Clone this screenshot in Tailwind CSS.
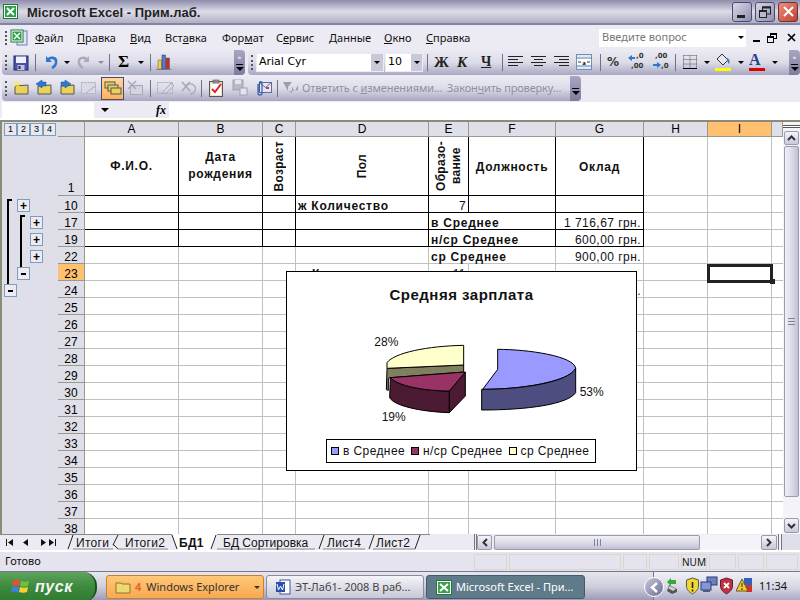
<!DOCTYPE html>
<html lang="ru">
<head>
<meta charset="UTF-8">
<title>Microsoft Excel - Прим.лаб.</title>
<script src="https://cdn.jsdelivr.net/npm/@tailwindcss/browser@4"></script>
</head>
<body class="w-[800px] h-[600px] overflow-hidden bg-[#ecebf4] font-['Liberation_Sans',sans-serif] text-black">
<div class="relative w-[800px] h-[600px] flex flex-col overflow-hidden">

  <!-- title bar -->
  <div class="h-[25px] shrink-0 flex items-center bg-gradient-to-b from-[#8e8dab] via-[#dcdce8] to-[#b0afc6] border-b-2 border-[#8583a3]">
    <svg class="ml-[3px] w-[15px] h-[15px]" viewBox="0 0 15 15"><rect x="0.5" y="0.5" width="14" height="14" fill="#fff" stroke="#1b7a34"/><rect x="2" y="2" width="11" height="11" fill="#2f9e4a"/><path d="M4 4l7 7M11 4l-7 7" stroke="#fff" stroke-width="2"/></svg>
    <span class="ml-[9px] mt-[2px] font-bold text-[13px] text-[#222]">Microsoft Excel - Прим.лаб.</span>
    <div class="ml-auto mr-[2px] flex gap-[3px]">
      <div class="w-[20px] h-[20px] rounded-[3px] border border-[#4a4a70] bg-gradient-to-br from-[#d8d8e8] to-[#9090b0] flex items-end justify-start pl-[4px] pb-[3px]"><div class="w-[8px] h-[3px] bg-[#222]"></div></div>
      <div class="w-[20px] h-[20px] rounded-[3px] border border-[#4a4a70] bg-gradient-to-br from-[#d8d8e8] to-[#9090b0] flex items-center justify-center"><svg class="w-[12px] h-[12px]" viewBox="0 0 12 12" fill="none" stroke="#222"><rect x="3.5" y="1" width="8" height="7" stroke-width="1"/><path d="M3 1.5h9" stroke-width="2"/><rect x="0.5" y="4.5" width="7" height="7" fill="#b8b8d0"/><path d="M0 5h8" stroke-width="2"/></svg></div>
      <div class="w-[20px] h-[20px] rounded-[3px] border border-[#70302a] bg-gradient-to-br from-[#e89080] to-[#c04030] flex items-center justify-center"><svg class="w-[13px] h-[13px]" viewBox="0 0 13 13"><path d="M2 2l9 9M11 2l-9 9" stroke="#fff" stroke-width="2"/></svg></div>
    </div>
  </div>

  <!-- menu bar -->
  <div class="h-[25px] shrink-0 flex items-center font-['Noto_Sans',sans-serif] text-[11px] text-[#111]">
    <div class="ml-[5px] w-[2px] h-[14px] border-l-2 border-dotted border-[#555]"></div>
    <svg class="ml-[3px] w-[18px] h-[17px]" viewBox="0 0 18 17"><rect x="7" y="2" width="10" height="14" fill="#dfe6f5" stroke="#6a7fb5"/><rect x="1" y="1" width="12" height="12" fill="#fff" stroke="#1b7a34"/><rect x="2.500" y="2.500" width="9" height="9" fill="#2f9e4a"/><path d="M4 4l6 6M10 4l-6 6" stroke="#fff" stroke-width="1.500"/></svg>
    <div class="ml-[7px] mt-[1px] flex">
      <span class="w-[42px]"><u>Ф</u>айл</span>
      <span class="w-[53px]"><u>П</u>равка</span>
      <span class="w-[35px]"><u>В</u>ид</span>
      <span class="w-[57px]">Вст<u>а</u>вка</span>
      <span class="w-[54px]">Фор<u>м</u>ат</span>
      <span class="w-[53px]">С<u>е</u>рвис</span>
      <span class="w-[55px]"><u>Д</u>анные</span>
      <span class="w-[42px]"><u>О</u>кно</span>
      <span class="w-[60px]"><u>С</u>правка</span>
    </div>
    <div class="ml-[113px] w-[147px] h-[18px] bg-white flex items-center pl-[3px] text-[#777]">Введите вопрос<span class="ml-auto mr-[2px] w-0 h-0 border-x-[3px] border-t-[3px] border-x-transparent border-t-black"></span></div>
    <div class="ml-[7px] w-[7px] h-[2px] bg-black mt-[6px]"></div>
    <svg class="ml-[7px] w-[10px] h-[10px]" viewBox="0 0 10 10" fill="none" stroke="#000"><rect x="3.500" y="0.500" width="6" height="5"/><path d="M3 1h7" stroke-width="2"/><rect x="0.500" y="3.500" width="6" height="6" fill="#ecebf4"/><path d="M0 4h7" stroke-width="2"/></svg>
    <svg class="ml-[10px] w-[9px] h-[9px]" viewBox="0 0 9 9"><path d="M1 1l7 7M8 1l-7 7" stroke="#000" stroke-width="1.700"/></svg>
  </div>

  <!-- standard + formatting toolbars -->
  <div class="h-[26px] shrink-0 flex">
    <div class="ml-[2px] w-[243px] h-[25px] rounded-[4px] bg-gradient-to-b from-[#ecebf4] via-[#dcdce8] to-[#a8a7c2] flex items-center relative overflow-hidden">
      <div class="absolute left-[3px] top-[5px] w-[2px] h-[15px] border-l-2 border-dotted border-[#555]"></div>
      <svg class="absolute left-[11px] top-[5px] w-[16px] h-[16px]" viewBox="0 0 16 16"><rect x="1" y="1" width="14" height="14" fill="#4a50b0" stroke="#23285c"/><rect x="3" y="1.500" width="10" height="6.500" fill="#eef0fa"/><rect x="4.500" y="10" width="7" height="5" fill="#c0c4dc"/><rect x="5.500" y="11" width="2" height="3" fill="#23285c"/></svg>
      <div class="absolute left-[33px] top-[4px] w-px h-[17px] bg-[#6f6e8c]"></div>
      <svg class="absolute left-[41px] top-[4px] w-[16px] h-[16px]" viewBox="0 0 16 16" fill="none"><path d="M3 2v6h6" fill="#2f78cf" /><path d="M4 7C7 2 14 3 13 9c-.4 2-2 4-4 5" stroke="#2f78cf" stroke-width="2.600"/></svg>
      <span class="absolute left-[62px] top-[11px] w-0 h-0 border-x-[3px] border-t-[3px] border-x-transparent border-t-black"></span>
      <svg class="absolute left-[74px] top-[4px] w-[16px] h-[16px]" viewBox="0 0 16 16" fill="none"><path d="M13 2v6H7" fill="#a9a9bd"/><path d="M12 7C9 2 2 3 3 9c.4 2 2 4 4 5" stroke="#a9a9bd" stroke-width="2.400"/></svg>
      <span class="absolute left-[96px] top-[11px] w-0 h-0 border-x-[3px] border-t-[3px] border-x-transparent border-t-[#8a8aa0]"></span>
      <div class="absolute left-[107px] top-[4px] w-px h-[17px] bg-[#6f6e8c]"></div>
      <span class="absolute left-[116px] top-[2px] font-['Liberation_Serif',serif] font-bold text-[17px] leading-[20px]">Σ</span>
      <span class="absolute left-[136px] top-[11px] w-0 h-0 border-x-[3px] border-t-[3px] border-x-transparent border-t-black"></span>
      <div class="absolute left-[148px] top-[4px] w-px h-[17px] bg-[#6f6e8c]"></div>
      <svg class="absolute left-[153px] top-[3px] w-[18px] h-[18px]" viewBox="0 0 18 18"><path d="M1 16h16l-1 1H1z" fill="#7a8ab0"/><rect x="3" y="7" width="3.500" height="9" fill="#f0d040" stroke="#555" stroke-width=".5"/><rect x="7" y="2" width="3.500" height="14" fill="#5a7ad0" stroke="#333" stroke-width=".5"/><rect x="11" y="5" width="3.500" height="11" fill="#c03030" stroke="#555" stroke-width=".5"/></svg>
      <div class="absolute right-0 top-0 w-[11px] h-[25px] bg-gradient-to-b from-[#a8a7c2] to-[#7d7c9e] flex flex-col items-center pt-[4px]">
        <span class="text-white text-[6px] leading-[7px] font-bold">»</span>
        <div class="mt-[3px] w-[7px] h-px bg-black"></div>
        <span class="mt-[2px] w-0 h-0 border-x-[4px] border-t-[4px] border-x-transparent border-t-black"></span>
      </div>
    </div>

    <div class="ml-[3px] w-[552px] h-[25px] rounded-[4px] bg-gradient-to-b from-[#ecebf4] via-[#dcdce8] to-[#a8a7c2] relative overflow-hidden">
      <div class="absolute left-[3px] top-[5px] w-[2px] h-[15px] border-l-2 border-dotted border-[#555]"></div>
      <div class="absolute left-[8px] top-[3px] w-[128px] h-[19px] bg-white border border-[#ecebf4] flex items-center font-['DejaVu_Sans',sans-serif] text-[11px] pl-[2px]">Arial Cyr<span class="ml-auto w-[12px] h-full bg-[#c8c8d8] flex items-center justify-center"><span class="w-0 h-0 border-x-[3px] border-t-[3px] border-x-transparent border-t-black"></span></span></div>
      <div class="absolute left-[137px] top-[3px] w-[38px] h-[19px] bg-white border border-[#ecebf4] flex items-center font-['DejaVu_Sans',sans-serif] text-[11px] pl-[2px]">10<span class="ml-auto w-[11px] h-full bg-[#c8c8d8] flex items-center justify-center"><span class="w-0 h-0 border-x-[3px] border-t-[3px] border-x-transparent border-t-black"></span></span></div>
      <div class="absolute left-[179px] top-[4px] w-px h-[17px] bg-[#6f6e8c]"></div>
      <span class="absolute left-[186px] top-[3px] font-['Liberation_Serif',serif] font-bold text-[15px] leading-[18px] text-[#222]">Ж</span>
      <span class="absolute left-[209px] top-[3px] font-['Liberation_Serif',serif] font-bold italic text-[15px] leading-[18px] text-[#222]">К</span>
      <span class="absolute left-[233px] top-[3px] font-['Liberation_Serif',serif] font-bold underline text-[14px] leading-[18px] text-[#222]">Ч</span>
      <div class="absolute left-[254px] top-[4px] w-px h-[17px] bg-[#6f6e8c]"></div>
      <svg class="absolute left-[260px] top-[6px] w-[15px] h-[12px]" viewBox="0 0 15 12" stroke="#222"><path d="M0 .5h15M0 3.500h10M0 6.500h15M0 9.500h10"/></svg>
      <svg class="absolute left-[283px] top-[6px] w-[15px] h-[12px]" viewBox="0 0 15 12" stroke="#222"><path d="M0 .5h15M3 3.500h9M0 6.500h15M3 9.500h9"/></svg>
      <svg class="absolute left-[306px] top-[6px] w-[15px] h-[12px]" viewBox="0 0 15 12" stroke="#222"><path d="M0 .5h15M5 3.500h10M0 6.500h15M5 9.500h10"/></svg>
      <svg class="absolute left-[328px] top-[4px] w-[16px] h-[16px]" viewBox="0 0 16 16"><rect x=".5" y=".5" width="15" height="15" fill="#dfe8f5" stroke="#6f8fb5"/><path d="M.5 4h15M.5 12h15" stroke="#6f8fb5"/><rect x="1" y="5" width="14" height="6" fill="#fff"/><text x="8" y="10.500" font-size="7" font-weight="bold" text-anchor="middle" font-family="Liberation Serif">a</text><path d="M2 8h3M14 8h-3" stroke="#333"/></svg>
      <div class="absolute left-[352px] top-[4px] w-px h-[17px] bg-[#6f6e8c]"></div>
      <span class="absolute left-[359px] top-[3px] font-['DejaVu_Sans',sans-serif] font-bold text-[12px] leading-[18px] text-[#333]">%</span>
      <svg class="absolute left-[380px] top-[4px] w-[17px] h-[16px]" viewBox="0 0 17 16"><path d="M0 4l4-3v2h3v2H4v2z" fill="#2f78cf"/></svg>
      <span class="absolute left-[388px] top-[1px] font-['DejaVu_Sans',sans-serif] font-bold text-[7px] leading-[10px] text-[#333]">,0</span>
      <span class="absolute left-[383px] top-[11px] font-['DejaVu_Sans',sans-serif] font-bold text-[7px] leading-[10px] text-[#333]">,00</span>
      <svg class="absolute left-[404px] top-[11px] w-[9px] h-[9px]" viewBox="0 0 9 9"><path d="M9 4L5 1v2H1v2h4v2z" fill="#2f78cf"/></svg>
      <span class="absolute left-[407px] top-[1px] font-['DejaVu_Sans',sans-serif] font-bold text-[7px] leading-[10px] text-[#333]">,00</span>
      <span class="absolute left-[413px] top-[11px] font-['DejaVu_Sans',sans-serif] font-bold text-[7px] leading-[10px] text-[#333]">,0</span>
      <div class="absolute left-[427px] top-[4px] w-px h-[17px] bg-[#6f6e8c]"></div>
      <svg class="absolute left-[435px] top-[5px] w-[14px] h-[14px]" viewBox="0 0 14 14" fill="none"><path d="M.5.5h13M.5 4.500h13M.5 9h13M.5.5v13M7 .5v13M13.500.5v13" stroke="#555" stroke-dasharray="1 1"/><path d="M0 13.500h14" stroke="#000"/></svg>
      <span class="absolute left-[456px] top-[11px] w-0 h-0 border-x-[3px] border-t-[3px] border-x-transparent border-t-black"></span>
      <svg class="absolute left-[467px] top-[3px] w-[16px] h-[14px]" viewBox="0 0 16 14"><path d="M7 1l6 6-5 5-6-6z" fill="#e8e8f0" stroke="#333"/><path d="M12 5c3 1 3 4 2 6-1-1-2-3-2-6z" fill="#3a78c8"/></svg>
      <div class="absolute left-[467px] top-[18px] w-[16px] h-[3px] bg-[#ffff00]"></div>
      <span class="absolute left-[490px] top-[11px] w-0 h-0 border-x-[3px] border-t-[3px] border-x-transparent border-t-black"></span>
      <span class="absolute left-[501px] top-[1px] font-['Liberation_Serif',serif] font-bold text-[16px] leading-[17px] text-[#23408f]">A</span>
      <div class="absolute left-[501px] top-[18px] w-[16px] h-[3px] bg-[#e00000]"></div>
      <span class="absolute left-[524px] top-[11px] w-0 h-0 border-x-[3px] border-t-[3px] border-x-transparent border-t-black"></span>
      <div class="absolute right-0 top-0 w-[11px] h-[25px] bg-gradient-to-b from-[#a8a7c2] to-[#7d7c9e] flex flex-col items-center pt-[4px]">
        <span class="text-white text-[6px] leading-[7px] font-bold">»</span>
        <div class="mt-[3px] w-[7px] h-px bg-black"></div>
        <span class="mt-[2px] w-0 h-0 border-x-[4px] border-t-[4px] border-x-transparent border-t-black"></span>
      </div>
    </div>
  </div>

  <!-- reviewing toolbar -->
  <div class="h-[26px] shrink-0">
    <div class="ml-[2px] w-[579px] h-[25px] rounded-[4px] bg-gradient-to-b from-[#ecebf4] via-[#dcdce8] to-[#a8a7c2] relative overflow-hidden">
      <div class="absolute left-[3px] top-[5px] w-[2px] h-[15px] border-l-2 border-dotted border-[#555]"></div>
      <svg class="absolute left-[10px] top-[4px] w-[17px] h-[16px]" viewBox="0 0 17 16"><path d="M3 6l13-1v9H3z" fill="#e8d25c" stroke="#555"/><path d="M5 1v7M1 4h8M2 1l6 6M8 1L2 7" stroke="#ffe860"/></svg>
      <svg class="absolute left-[33px] top-[3px] w-[17px] h-[17px]" viewBox="0 0 17 17"><path d="M3 7l13-1v9H3z" fill="#e8d25c" stroke="#555"/><path d="M1 5l6-4v2h4v4H7v2z" fill="#2f78cf" stroke="#1d4f90" stroke-width=".5"/></svg>
      <svg class="absolute left-[56px] top-[3px] w-[17px] h-[17px]" viewBox="0 0 17 17"><path d="M3 7l13-1v9H3z" fill="#e8d25c" stroke="#555"/><path d="M13 5L7 1v2H3v4h4v2z" fill="#2f78cf" stroke="#1d4f90" stroke-width=".5"/></svg>
      <svg class="absolute left-[79px] top-[4px] w-[16px] h-[15px]" viewBox="0 0 16 15" fill="none"><rect x=".5" y="2.500" width="14" height="11" fill="#dadae4" stroke="#a9a9bd" stroke-dasharray="2 1"/><path d="M5 13l9-7" stroke="#a9a9bd"/></svg>
      <div class="absolute left-[99px] top-[1px] w-[23px] h-[23px] bg-gradient-to-b from-[#ffd79c] to-[#ffb056] border border-[#4b4b6f]"></div>
      <svg class="absolute left-[102px] top-[5px] w-[18px] h-[15px]" viewBox="0 0 18 15"><rect x="1" y="1" width="10" height="6" fill="#e8d25c" stroke="#555"/><rect x="4" y="4" width="10" height="6" fill="#e8d25c" stroke="#555"/><rect x="7" y="7" width="10" height="6" fill="#e8d25c" stroke="#555"/></svg>
      <svg class="absolute left-[125px] top-[4px] w-[17px] h-[16px]" viewBox="0 0 17 16" fill="none"><rect x="3.500" y="5.500" width="12" height="9" fill="#d4d4e0" stroke="#a9a9bd"/><path d="M1 1l8 8M9 1L1 9" stroke="#a9a9bd" stroke-width="1.500"/></svg>
      <div class="absolute left-[148px] top-[4px] w-px h-[17px] bg-[#6f6e8c]"></div>
      <svg class="absolute left-[155px] top-[4px] w-[18px] h-[16px]" viewBox="0 0 18 16" fill="none"><rect x=".5" y="2.500" width="15" height="11" stroke="#a9a9bd" stroke-dasharray="2 1"/><path d="M5 13l9-10 3 3-8 7z" fill="#dadae4" stroke="#a9a9bd"/></svg>
      <svg class="absolute left-[178px] top-[4px] w-[17px] h-[16px]" viewBox="0 0 17 16" fill="none"><path d="M2 2l8 9M10 2l-8 9" stroke="#a9a9bd" stroke-width="1.800"/><path d="M6 5c6-3 11 1 9 6-1 2-3 3-5 3" stroke="#a9a9bd" stroke-width="1.300"/></svg>
      <div class="absolute left-[199px] top-[4px] w-px h-[17px] bg-[#6f6e8c]"></div>
      <svg class="absolute left-[206px] top-[3px] w-[16px] h-[18px]" viewBox="0 0 16 18"><rect x="1.500" y="2.500" width="13" height="15" fill="#f4e0c0" stroke="#555"/><rect x="3" y="5" width="10" height="11" fill="#fff"/><rect x="5" y="1" width="6" height="3" fill="#9090a8" stroke="#444" stroke-width=".5"/><path d="M4 10l3 3 6-8" fill="none" stroke="#e02020" stroke-width="2"/></svg>
      <svg class="absolute left-[230px] top-[3px] w-[16px] h-[17px]" viewBox="0 0 16 17"><rect x="1" y="1" width="10" height="10" fill="#b8b8c8" stroke="#a0a0b4"/><rect x="3" y="1" width="6" height="4" fill="#e4e4ec"/><rect x="8" y="9" width="7" height="7" fill="#e4e4ec" stroke="#a0a0b4"/></svg>
      <svg class="absolute left-[252px] top-[3px] w-[18px] h-[18px]" viewBox="0 0 18 18" fill="none"><rect x="5.500" y="3.500" width="12" height="10" fill="#dfe6f5" stroke="#5b6f9f"/><path d="M5.500 3.500l6 5 6-5" stroke="#5b6f9f"/><rect x="12" y="8" width="3" height="2" fill="#e03030"/><path d="M4 5v9a2 2 0 0 0 4 0V4a1.300 1.300 0 0 0-2.600 0v9" stroke="#3a5aa0" stroke-width="1.200"/></svg>
      <div class="absolute left-[275px] top-[4px] w-px h-[17px] bg-[#6f6e8c]"></div>
      <svg class="absolute left-[281px] top-[5px] w-[16px] h-[14px]" viewBox="0 0 16 14" fill="#9c9cb0"><path d="M0 1h9L5 6v4zM9 5v7l-3-2h6l3-6v5l-4 1z"/></svg>
      <span class="absolute left-[300px] top-[4px] font-['Noto_Sans',sans-serif] text-[11px] leading-[16px] tracking-[-0.12px] text-[#8f8fa5] whitespace-nowrap">Ответить с <u>и</u>зменениями...</span>
      <span class="absolute left-[445px] top-[4px] font-['Noto_Sans',sans-serif] text-[11px] leading-[16px] tracking-[-0.15px] text-[#8f8fa5] whitespace-nowrap">Закон<u>ч</u>ить проверку...</span>
      <div class="absolute right-0 top-0 w-[11px] h-[25px] bg-gradient-to-b from-[#a8a7c2] to-[#7d7c9e] flex flex-col items-center pt-[12px]">
        <div class="w-[7px] h-px bg-black"></div>
        <span class="mt-[2px] w-0 h-0 border-x-[4px] border-t-[4px] border-x-transparent border-t-black"></span>
      </div>
    </div>
  </div>

  <!-- formula bar -->
  <div class="h-[16px] shrink-0 flex items-center text-[12px]">
    <div class="ml-[2px] w-[92px] h-full bg-white flex items-center justify-center pl-[2px]">I23</div>
    <div class="w-[75px] h-full flex items-center pl-[7px]"><span class="w-0 h-0 border-x-[4px] border-t-[4px] border-x-transparent border-t-black"></span><span class="ml-[47px] font-['Liberation_Serif',serif] italic font-bold text-[12px]">fx</span></div>
    <div class="flex-1 h-full bg-white"></div>
  </div>
  <div class="h-[2px] shrink-0 bg-white"></div>

  <!-- sheet -->
  <div class="relative h-[414px] shrink-0 flex border-t-2 border-[#8b8b78] overflow-hidden">
    <div class="w-[58px] shrink-0 bg-[#dfdfe9] border-l-2 border-[#8b8b78]"></div>
    <div class="w-[725px] shrink-0 bg-white overflow-hidden" id="grid"></div>
    <div class="w-[17px] shrink-0 bg-[#f4f4f8] flex flex-col items-center">
      <div class="h-[3px] w-full mt-[3px] border-y border-[#555] bg-white"></div>
      <div class="mt-[3px] w-[15px] h-[14px] rounded-[2px] bg-gradient-to-b from-[#f4f4fa] to-[#c8c8d8] border border-[#9a9ab0] flex items-center justify-center"><svg class="w-[9px] h-[6px]" viewBox="0 0 9 6" fill="none"><path d="M1 5l3.500-3.500L8 5" stroke="#333" stroke-width="2"/></svg></div>
      <div class="mt-px w-[15px] h-[351px] rounded-[2px] bg-gradient-to-r from-[#f0f0f6] via-[#dcdce8] to-[#c0c0d2] border border-[#9a9ab0] flex items-center justify-center"><div class="w-[7px] h-[7px] border-y border-[#8080a0] flex items-center"><div class="w-full h-px bg-[#8080a0]"></div></div></div>
      <div class="mt-[21px] w-[15px] h-[15px] rounded-[2px] bg-gradient-to-b from-[#f4f4fa] to-[#c8c8d8] border border-[#9a9ab0] flex items-center justify-center"><svg class="w-[9px] h-[6px]" viewBox="0 0 9 6" fill="none"><path d="M1 1l3.500 3.500L8 1" stroke="#333" stroke-width="2"/></svg></div>
    </div>

    <!-- outline level buttons and group brackets, over the gutter -->
    <div class="absolute left-[4px] top-[1px] w-[52px] h-[13px] flex text-[9px] leading-[11px] text-center">
      <span class="w-[13px] border border-[#7f9db9] bg-[#e8e8f0]">1</span><span class="w-[13px] border border-[#7f9db9] bg-[#e8e8f0]">2</span><span class="w-[13px] border border-[#7f9db9] bg-[#e8e8f0]">3</span><span class="w-[13px] border border-[#7f9db9] bg-[#e8e8f0]">4</span>
    </div>
    <div class="absolute left-[7px] top-[77px] w-[5px] h-[86px] border-l-2 border-t-2 border-black"></div>
    <div class="absolute left-[20px] top-[93px] w-[5px] h-[53px] border-l-2 border-t-2 border-black"></div>
    <div class="absolute left-[17px] top-[77px] w-[13px] h-[13px] border border-[#7f9db9] bg-[#ecebf4] flex items-center justify-center font-bold text-[12px] leading-none">+</div>
    <div class="absolute left-[30px] top-[94px] w-[13px] h-[13px] border border-[#7f9db9] bg-[#ecebf4] flex items-center justify-center font-bold text-[12px] leading-none">+</div>
    <div class="absolute left-[30px] top-[111px] w-[13px] h-[13px] border border-[#7f9db9] bg-[#ecebf4] flex items-center justify-center font-bold text-[12px] leading-none">+</div>
    <div class="absolute left-[30px] top-[128px] w-[13px] h-[13px] border border-[#7f9db9] bg-[#ecebf4] flex items-center justify-center font-bold text-[12px] leading-none">+</div>
    <div class="absolute left-[17px] top-[145px] w-[13px] h-[13px] border border-[#7f9db9] bg-[#ecebf4] flex items-center justify-center"><div class="w-[5px] h-[2px] bg-black"></div></div>
    <div class="absolute left-[4px] top-[162px] w-[13px] h-[13px] border border-[#7f9db9] bg-[#ecebf4] flex items-center justify-center"><div class="w-[5px] h-[2px] bg-black"></div></div>

    <!-- selected cell I23 -->
    <div class="absolute left-[707px] top-[142px] w-[66px] h-[19px] border-[3px] border-[#222]"></div>
    <div class="absolute left-[770px] top-[157px] w-[5px] h-[5px] bg-[#222]"></div>

    <!-- embedded chart -->
    <div class="absolute left-[286px] top-[149px] w-[351px] h-[200px] bg-white border border-black">
      <div class="mt-[14px] text-center font-bold text-[15px] leading-[18px] tracking-[0.5px] text-[#111]">Средняя зарплата</div>
      <svg class="absolute left-0 top-0 w-[349px] h-[198px]" viewBox="18 33 1047 594" fill="none" stroke="#000" stroke-width="3">
        <path d="M650 265C740 265 880 285 884 322C880 350 760 385 605 385L650 325Z" fill="#9999ff"/>
        <path d="M605 385C720 385 860 365 884 322L884 395C860 430 740 447 602 447L602 385Z" fill="#4d4d80"/>
        <path d="M318 322L548 312L548 333L328 350L322 352L322 388L316 386Z" fill="#808060"/>
        <path d="M548 253L548 312L318 322L318 305C340 275 440 255 548 253Z" fill="#ffffcc"/>
        <path d="M328 350C350 375 430 390 505 390L505 455C420 452 340 435 326 410Z" fill="#4d1a33"/>
        <path d="M505 390L553 333L553 405L505 455Z" fill="#4d1a33"/>
        <path d="M328 350L553 333L505 390C430 390 350 375 328 350Z" fill="#993366"/>
        <g fill="#111" stroke="none" font-family="Liberation Sans" font-size="36">
          <text x="896" y="405">53%</text>
          <text x="302" y="480">19%</text>
          <text x="280" y="255">28%</text>
        </g>
      </svg>
      <div class="absolute left-[39px] top-[167px] w-[270px] h-[24px] border border-black flex items-center text-[12px] tracking-[0.4px] text-[#111]">
        <span class="ml-[4px] w-[8px] h-[8px] bg-[#9999ff] border border-black"></span><span class="ml-[4px]">в Среднее</span>
        <span class="ml-[6px] w-[8px] h-[8px] bg-[#993366] border border-black"></span><span class="ml-[4px]">н/ср Среднее</span>
        <span class="ml-[6px] w-[8px] h-[8px] bg-[#ffffcc] border border-black"></span><span class="ml-[4px]">ср Среднее</span>
      </div>
    </div>
  </div>

  <!-- sheet tabs and horizontal scrollbar -->
  <div class="relative h-[16px] shrink-0 bg-[#ecebf4] flex text-[12px] tracking-[0.3px] text-[#111]">
    <svg class="absolute left-0 top-0 w-[430px] h-[16px]" viewBox="0 0 430 16" fill="none" stroke="#222">
      <path d="M172 0L217 0L211 16L178 16Z" fill="#fff" stroke="none"/>
      <path d="M0 .5H172M217 .5H474" stroke="#888"/>
      <path d="M68 15l5-14M118 15l-4-4-1 0 5-10M172 1l5 14M216 1l-5 14M319 15l5-14M369 15l5-14M415 15l5-14"/>
      <path d="M73 15h40M118 15h50M217 15h98M323 15h42M373 15h42" stroke="#888"/>
    </svg>
    <div class="relative w-[69px] flex items-center text-[9px]">
      <svg class="ml-[6px] w-[50px] h-[9px]" viewBox="0 0 50 9" fill="#111"><path d="M0 1h1v7H0zM7 1v7L2 4.500zM22 1v7l-5-3.500zM35 1v7l5-3.500zM50 1h-1v7h1zM43 1v7l5-3.500z"/></svg>
    </div>
    <span class="relative w-[49px] pl-[7px]">Итоги</span>
    <span class="relative w-[54px] pl-[7px]">Итоги2</span>
    <span class="relative w-[41px] pl-[7px] font-bold">БД1</span>
    <span class="relative w-[107px] pl-[10px] tracking-[0px]">БД Сортировка</span>
    <span class="relative w-[50px] pl-[7px]">Лист4</span>
    <span class="relative w-[50px] pl-[6px]">Лист2</span>
    <div class="absolute left-[474px] top-0 w-[3px] h-full border-x border-[#777]"></div>
    <div class="absolute left-[477px] top-[1px] w-[15px] h-[15px] rounded-[2px] bg-gradient-to-b from-[#f4f4fa] to-[#c8c8d8] border border-[#9a9ab0] flex items-center justify-center"><svg class="w-[6px] h-[9px]" viewBox="0 0 6 9" fill="none"><path d="M5 1L1.500 4.500 5 8" stroke="#333" stroke-width="2"/></svg></div>
    <div class="absolute left-[494px] top-[1px] w-[206px] h-[15px] rounded-[2px] bg-gradient-to-b from-[#f0f0f6] via-[#dcdce8] to-[#c0c0d2] border border-[#9a9ab0] flex items-center justify-center"><div class="w-[7px] h-[7px] border-x border-[#8080a0] flex justify-center"><div class="h-full w-px bg-[#8080a0]"></div></div></div>
    <div class="absolute left-[700px] top-[1px] w-[61px] h-[15px] bg-[#f4f4f8]"></div>
    <div class="absolute left-[761px] top-[1px] w-[16px] h-[15px] rounded-[2px] bg-gradient-to-b from-[#f4f4fa] to-[#c8c8d8] border border-[#9a9ab0] flex items-center justify-center"><svg class="w-[6px] h-[9px]" viewBox="0 0 6 9" fill="none"><path d="M1 1l3.500 3.500L1 8" stroke="#333" stroke-width="2"/></svg></div>
    <div class="absolute left-[778px] top-0 w-[4px] h-full border-x border-[#777] bg-[#f4f4f8]"></div>
    <div class="absolute left-[782px] top-0 w-[18px] h-full bg-[#dfdfe9]"></div>
  </div>

  <!-- status bar -->
  <div class="relative h-[21px] shrink-0 bg-[#e4e3ee] border-t-2 border-white flex items-center font-['Noto_Sans',sans-serif] text-[11px] text-[#111]">
    <span class="ml-[5px]">Готово</span>
    <div class="absolute left-[474px] top-[2px] flex gap-[2px]">
      <div class="w-[33px] h-[16px] border border-[#d8d8c8]"></div>
      <div class="w-[112px] h-[16px] border border-[#d8d8c8]"></div>
      <div class="w-[24px] h-[16px] border border-[#d8d8c8]"></div>
      <div class="w-[30px] h-[16px] border border-[#d8d8c8]"></div>
      <div class="w-[26px] h-[16px] border border-[#d8d8c8] flex items-center justify-center text-[10px] leading-none">NUM</div>
      <div class="w-[27px] h-[16px] border border-[#d8d8c8]"></div>
      <div class="w-[26px] h-[16px] border border-[#d8d8c8]"></div>
      <div class="w-[32px] h-[16px] border border-[#d8d8c8]"></div>
    </div>
  </div>

  <!-- taskbar -->
  <div class="relative h-[30px] shrink-0 bg-gradient-to-b from-[#e6e6ee] via-[#cfcfdc] to-[#9897b4] border-t border-[#77768f] overflow-hidden font-['Noto_Sans',sans-serif] text-[11px]">
    <div class="absolute left-0 top-0 w-[97px] h-[30px] rounded-r-[14px] bg-gradient-to-b from-[#5fa35f] via-[#3c8a3c] to-[#2f7a30] border-r-2 border-[#1d4f1d] flex items-center">
      <svg class="ml-[11px] w-[20px] h-[18px]" viewBox="0 0 20 18"><path d="M2 3c3-2 5-1 7 0L8 8C6 7 4 7 1 8z" fill="#e85030"/><path d="M10 3c3 1 5 1 8 0l-1 5c-3 1-5 1-8 0z" fill="#70c040"/><path d="M1 9c3-1 5-1 7 0l-1 6c-3-2-5-2-7 0z" fill="#4080e0"/><path d="M9 9c3 1 5 1 8 0l-1 5c-3 1-5 1-8 0z" fill="#f8d030"/></svg>
      <span class="ml-[4px] font-['Liberation_Sans',sans-serif] font-bold italic text-[16px] tracking-[0.6px] text-[#f4f4f4]">пуск</span>
    </div>
    <div class="absolute left-[106px] top-[3px] w-[158px] h-[24px] rounded-[3px] bg-gradient-to-b from-[#ffc878] to-[#f8a850] border border-[#c88030] flex items-center text-[#333] whitespace-nowrap">
      <svg class="ml-[8px] w-[16px] h-[14px]" viewBox="0 0 16 14"><path d="M1 3h5l1 1h8v9H1z" fill="#f0d870" stroke="#8a7530"/></svg>
      <span class="ml-[4px] font-bold text-[#e8642c]">4</span>
      <span class="ml-[5px]">Windows Explorer</span>
      <span class="ml-auto mr-[3px] w-0 h-0 border-x-[3px] border-t-[3px] border-x-transparent border-t-[#333]"></span>
    </div>
    <div class="absolute left-[266px] top-[3px] w-[158px] h-[24px] rounded-[3px] bg-gradient-to-b from-[#f4f4f8] to-[#c8c8d8] border border-[#8a8aa0] flex items-center text-[#444] whitespace-nowrap">
      <svg class="ml-[8px] w-[16px] h-[16px]" viewBox="0 0 16 16"><rect x="5" y="1" width="10" height="14" fill="#fff" stroke="#3858a8"/><rect x="1" y="3" width="9" height="10" fill="#2850a8"/><path d="M2 5l1.500 6L5.500 7 7.500 11 9 5" fill="none" stroke="#fff"/></svg>
      <span class="ml-[4px]">ЭТ-Лаб1- 2008 В раб...</span>
    </div>
    <div class="absolute left-[426px] top-[3px] w-[159px] h-[24px] rounded-[3px] bg-[#5f7a88] border border-[#455a68] flex items-center text-white whitespace-nowrap">
      <svg class="ml-[9px] w-[16px] h-[15px]" viewBox="0 0 16 15"><rect x=".5" y=".5" width="15" height="14" fill="#fff" stroke="#1b7a34"/><rect x="2" y="2" width="12" height="11" fill="#3aa050"/><path d="M4 4l8 7M12 4l-8 7" stroke="#fff" stroke-width="2"/></svg>
      <span class="ml-[4px]">Microsoft Excel - При...</span>
    </div>

    <!-- tray -->
    <div class="absolute left-[653px] top-0 w-[147px] h-[30px] border-l border-[#77768f] bg-gradient-to-b from-[#f0f0f6] via-[#d8d8e4] to-[#a5a4bf]"></div>
    <div class="absolute left-[644px] top-[5px] w-[20px] h-[20px] rounded-full bg-gradient-to-br from-[#c8c8dc] to-[#6e6e92] border border-white flex items-center justify-center"><svg class="w-[9px] h-[11px]" viewBox="0 0 9 11" fill="none"><path d="M7 1L2 5.500 7 10" stroke="#fff" stroke-width="2.500"/></svg></div>
    <svg class="absolute left-[665px] top-[5px] w-[17px] h-[18px]" viewBox="0 0 17 18"><path d="M4 8l8 4v3l-5 2-5-3z" fill="#555"/><path d="M5 9l6 3-3 2-5-3z" fill="#d0d0d0"/><path d="M2 5l4-4v2h5v4H6v2z" fill="#38a838"/></svg>
    <svg class="absolute left-[685px] top-[5px] w-[15px] h-[18px]" viewBox="0 0 15 18"><path d="M7.500 1l6 2v6c0 4-3 6-6 8-3-2-6-4-6-8V3z" fill="#f0d830" stroke="#555"/><path d="M7.500 5v6M7.500 12.500v2" stroke="#222" stroke-width="1.600"/></svg>
    <svg class="absolute left-[700px] top-[4px] w-[18px] h-[18px]" viewBox="0 0 18 18"><rect x="7" y="1" width="10" height="8" fill="#6a80c0" stroke="#303a70"/><rect x="1" y="6" width="10" height="8" fill="#8098d8" stroke="#303a70"/><rect x="3" y="14" width="7" height="2" fill="#505a80"/></svg>
    <svg class="absolute left-[719px] top-[5px] w-[15px] h-[18px]" viewBox="0 0 15 18"><path d="M7.500 1l6 2v6c0 4-3 6-6 8-3-2-6-4-6-8V3z" fill="#c03040" stroke="#602030"/><path d="M5 6l5 5M10 6l-5 5" stroke="#fff" stroke-width="1.800"/></svg>
    <svg class="absolute left-[736px] top-[4px] w-[17px] h-[18px]" viewBox="0 0 17 18"><rect x="8" y="2" width="8" height="7" fill="#3060c0"/><rect x="10" y="9" width="6" height="7" fill="#d03030"/><path d="M6 3l6 12H0z" fill="#f0d030" stroke="#705010"/><path d="M6 7v4M6 12v2" stroke="#222"/></svg>
    <span class="absolute left-[759px] top-[7px] text-[11px] leading-[14px] text-[#111]">11:34</span>
  </div>
</div>

<script>
  const gridEl = document.getElementById('grid');
  const colClass = 'grid grid-cols-[27px_94px_84px_33px_133px_40px_87px_88px_64px_64px_11px]';
  const rowClass = colClass + ' grid-rows-[17px] h-[17px]';
  const head = ['', 'A', 'B', 'C', 'D', 'E', 'F', 'G', 'H', 'I', ''];
  const hdrCell = 'border-r border-b border-[#9a9a88] flex items-center justify-center text-[12px] leading-none';

  let html = '<div class="' + colClass + ' h-[15px]">';
  head.forEach((h, i) => {
    const bg = i === 9 ? ' bg-[#ffc06f]' : ' bg-[#dfdfe9]';
    html += '<div class="' + hdrCell + bg + '">' + h + '</div>';
  });
  html += '</div>';

  // row 1 with the table captions
  const bc = 'border-r border-b border-black flex items-center justify-center text-center font-bold text-[12px] leading-[17px] tracking-[0.7px] text-[#111]';
  html += '<div class="' + colClass + ' h-[59px]">' +
    '<div class="bg-[#dfdfe9] border-r border-b border-[#9a9a88] flex items-end justify-center text-[12px] leading-[12px] pb-px">1</div>' +
    '<div class="' + bc + '"><span class="mt-[1px]">Ф.И.О.</span></div>' +
    '<div class="' + bc + '"><span>Дата<br>рождения</span></div>' +
    '<div class="' + bc + '"><span class="[writing-mode:vertical-rl] rotate-180 tracking-[0.3px]">Возраст</span></div>' +
    '<div class="' + bc + '"><span class="[writing-mode:vertical-rl] rotate-180 tracking-[0.3px]">Пол</span></div>' +
    '<div class="' + bc + '"><span class="[writing-mode:vertical-rl] rotate-180 leading-[15px] tracking-[0.3px]">Образо-<br>вание</span></div>' +
    '<div class="' + bc + '"><span class="mt-[2px]">Должность</span></div>' +
    '<div class="' + bc + '"><span class="mt-[2px]">Оклад</span></div>' +
    '<div class="border-r border-b border-[#c0c0c0]"></div><div class="border-r border-b border-[#c0c0c0]"></div><div class="border-b border-[#c0c0c0]"></div></div>';

  const rows = [
    { n: 10, black: 7, d: 'ж Количество', e: '7' },
    { n: 17, black: 7, e: 'в Среднее', g: '1 716,67 грн.' },
    { n: 19, black: 7, e: 'н/ср Среднее', g: '600,00 грн.' },
    { n: 22, black: 0, e: 'ср Среднее', g: '900,00 грн.' },
    { n: 23, black: 0, d: 'Количество', e: '11', num: true },
    { n: 24, black: 0, g: 'грн.' }
  ];
  for (let n = 25; n <= 38; n++) rows.push({ n: n, black: 0 });

  const black = 'border-r border-b border-black';
  const grey = 'border-r border-b border-[#c0c0c0]';
  const boldTxt = ' font-bold text-[12px] tracking-[0.75px] text-[#111] whitespace-nowrap leading-[20px]';
  const valTxt = ' text-[12px] tracking-[0.45px] text-[#111] text-right whitespace-nowrap leading-[20px] pr-[2px]';

  rows.forEach(r => {
    const sel = r.n === 23 ? ' bg-[#ffc06f]' : ' bg-[#dfdfe9]';
    html += '<div class="' + rowClass + '">';
    html += '<div class="border-r border-b border-[#9a9a88] flex items-center justify-center text-[12px] leading-none pt-[3px]' + sel + '">' + r.n + '</div>';
    const b = r.black ? black : grey;
    html += '<div class="' + b + '"></div><div class="' + b + '"></div><div class="' + b + '"></div>';
    if (r.n === 23) {
      html += '<div class="' + grey + ' pl-[16px]' + boldTxt + '">' + r.d + '</div>';
      html += '<div class="' + grey + valTxt + '">' + r.e + '</div>';
    } else if (r.n === 10) {
      html += '<div class="' + b + ' pl-[2px]' + boldTxt + '">' + r.d + '</div>';
      html += '<div class="' + b + valTxt + '">' + r.e + '</div>';
    } else if (r.e) {
      // label spills over E and F
      html += '<div class="' + b + '"></div>';
      html += '<div class="col-span-2 pl-[2px] ' + b + boldTxt + '">' + r.e + '</div>';
    } else {
      html += '<div class="' + b + '"></div><div class="' + b + '"></div><div class="' + b + '"></div>';
    }
    if (r.n === 10) html += '<div class="' + b + '"></div>';
    if (r.n === 23) html += '<div class="' + grey + '"></div>';
    html += '<div class="' + (r.black ? black : grey) + valTxt + '">' + (r.g || '') + '</div>';
    html += '<div class="' + grey + '"></div><div class="' + grey + '"></div><div class="border-b border-[#c0c0c0]"></div></div>';
  });
  gridEl.innerHTML = html;
</script>
</body>
</html>
